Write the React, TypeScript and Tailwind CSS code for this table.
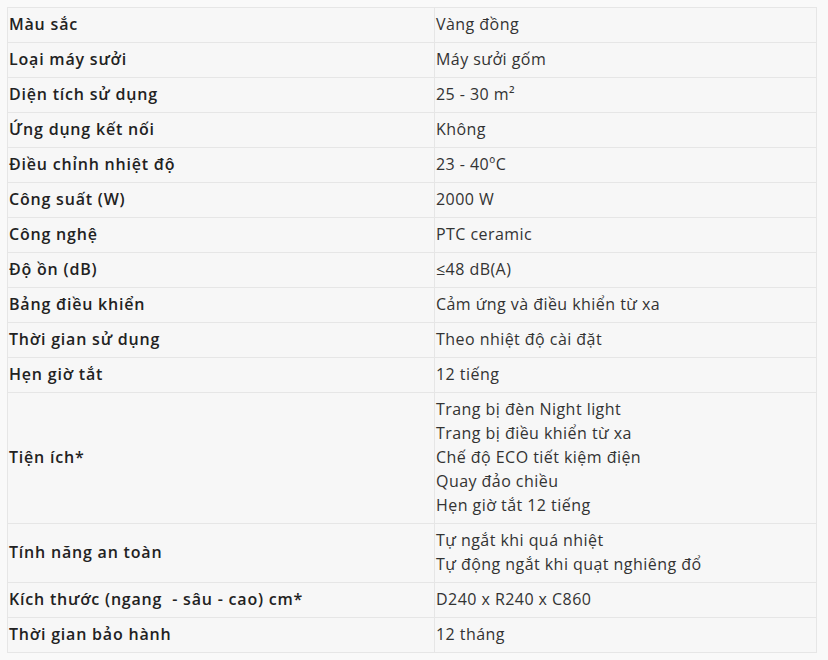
const rows: [string, string[]][] = [
  ["Màu sắc", ["Vàng đồng"]],
  ["Loại máy sưởi", ["Máy sưởi gốm"]],
  ["Diện tích sử dụng", ["25 - 30 m²"]],
  ["Ứng dụng kết nối", ["Không"]],
  ["Điều chỉnh nhiệt độ", ["23 - 40ºC"]],
  ["Công suất (W)", ["2000 W"]],
  ["Công nghệ", ["PTC ceramic"]],
  ["Độ ồn (dB)", ["≤48 dB(A)"]],
  ["Bảng điều khiển", ["Cảm ứng và điều khiển từ xa"]],
  ["Thời gian sử dụng", ["Theo nhiệt độ cài đặt"]],
  ["Hẹn giờ tắt", ["12 tiếng"]],
  [
    "Tiện ích*",
    [
      "Trang bị đèn Night light",
      "Trang bị điều khiển từ xa",
      "Chế độ ECO tiết kiệm điện",
      "Quay đảo chiều",
      "Hẹn giờ tắt 12 tiếng",
    ],
  ],
  ["Tính năng an toàn", ["Tự ngắt khi quá nhiệt", "Tự động ngắt khi quạt nghiêng đổ"]],
  ["Kích thước (ngang  - sâu - cao) cm*", ["D240 x R240 x C860"]],
  ["Thời gian bảo hành", ["12 tháng"]],
];

export default function App() {
  return (
    <div className="min-h-[660px] bg-[#f9f9f9] pt-[7px] pl-[7px] font-['Open_Sans',sans-serif] text-[16px] leading-6 text-[#222]">
      <table className="w-[810px] border-collapse bg-[#f7f7f7]">
        <tbody>
          {rows.map(([label, values]) => (
            <tr key={label}>
              <td className="w-[427px] whitespace-pre border border-[#e6e6e6] pt-[4px] pb-[6px] pl-px align-middle font-semibold tracking-[0.8px]">
                {label}
              </td>
              <td className="border border-[#e6e6e6] pt-[4px] pb-[6px] pl-px align-middle tracking-[0.45px] text-[#333]">
                {values.map((v) => (
                  <div key={v}>{v}</div>
                ))}
              </td>
            </tr>
          ))}
        </tbody>
      </table>
    </div>
  );
}
